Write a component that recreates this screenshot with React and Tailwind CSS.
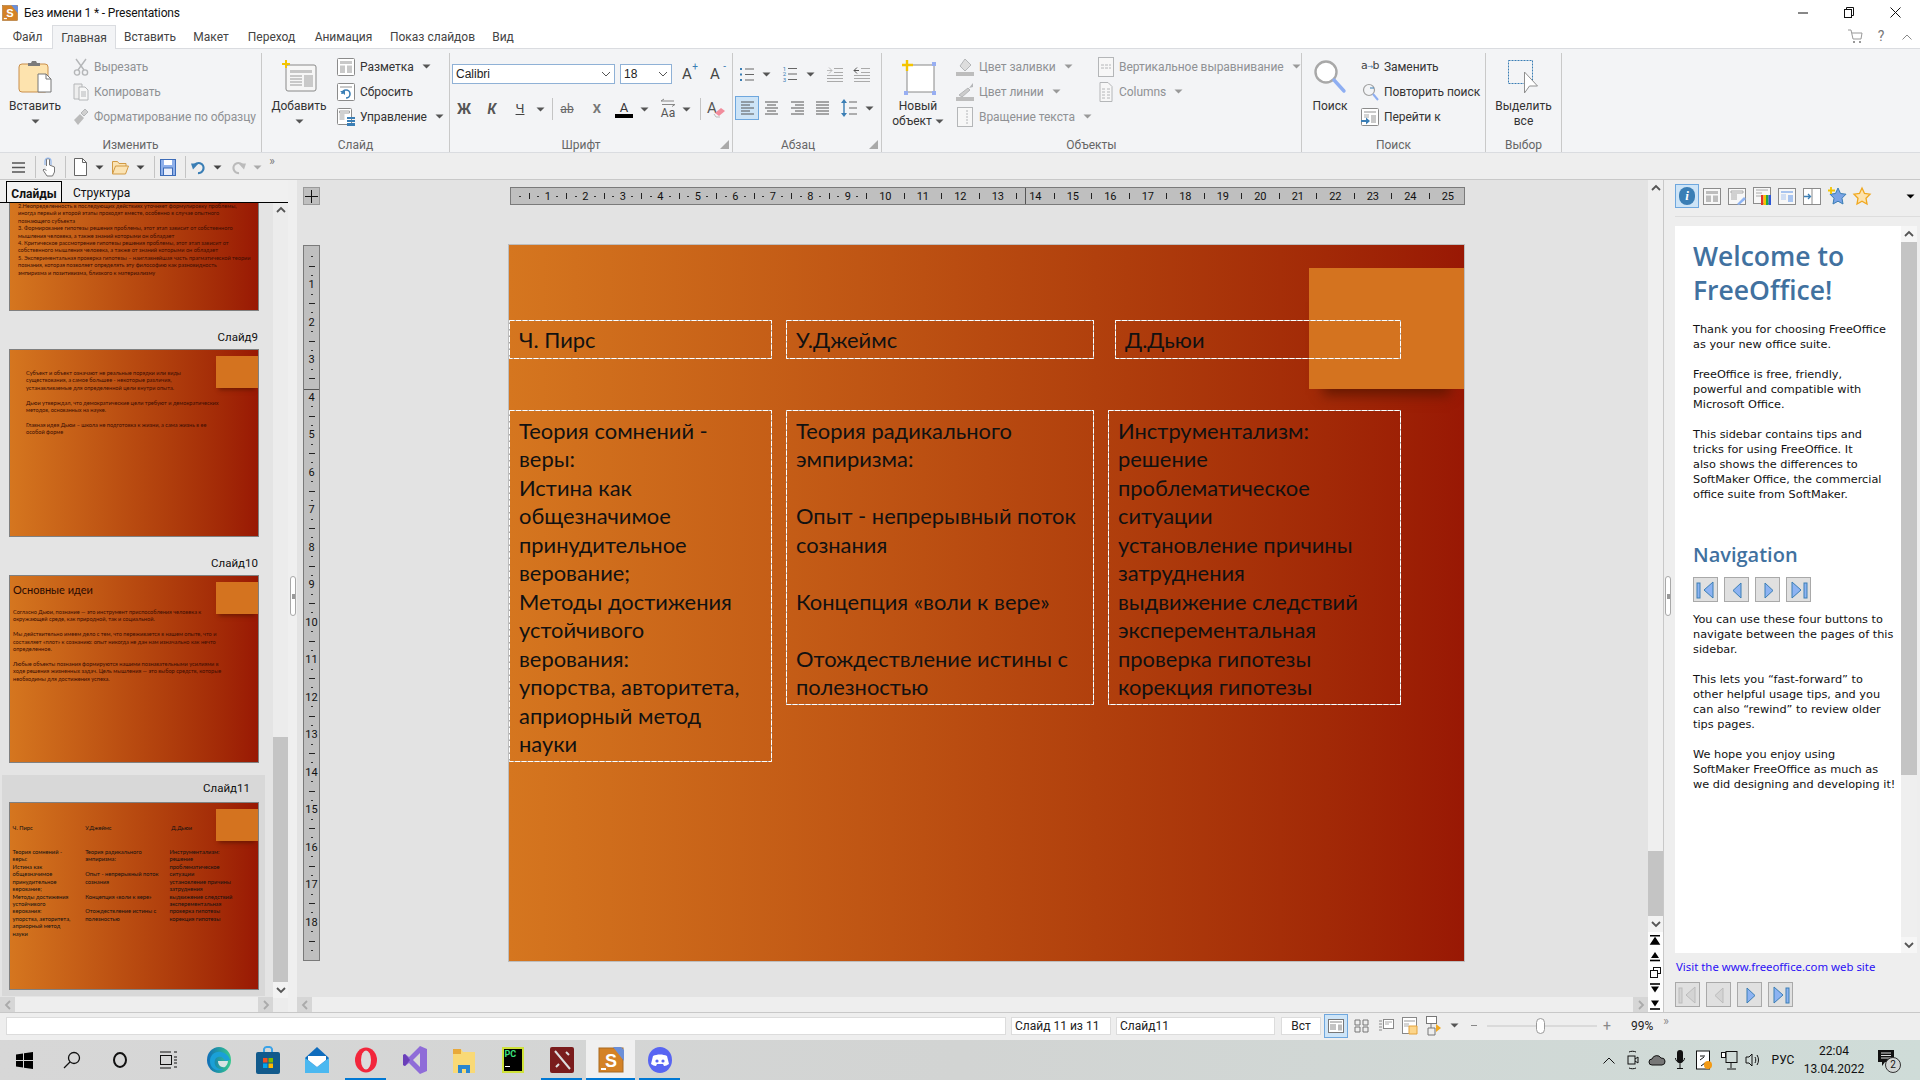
import React from "react";

const S = ({ w, h, children, className = "" }) => (
  <svg width={w} height={h} viewBox={`0 0 ${w} ${h}`} fill="none" className={"flex-none overflow-visible " + className}>{children}</svg>
);
const Caret = ({ c = "#555" }) => <S w={9} h={5}><path d="M0.5 0.5h8L4.5 4.5z" fill={c} /></S>;
const Dim = "#b4b6b8";
const Cell = ({ w, className = "", children }) => <div className={"flex items-center justify-center flex-none " + w + " " + className}>{children}</div>;
const Sep = ({ className = "" }) => <div className={"w-px h-[22px] bg-[#c4c4c4] flex-none " + className} />;

/* ---------- ribbon icons ---------- */
const PasteIcon = () => (
  <S w={34} h={33}>
    <rect x="1" y="4" width="29" height="28" rx="3" fill="#fde3ae" stroke="#c98e4a" />
    <path d="M10 6V3h3l1-2h4l1 2h3v3z" fill="#7b7b7b" />
    <path d="M20 14h8l5 5v13H20z" fill="#fff" stroke="#777" />
    <path d="M28 14v5h5" stroke="#777" />
  </S>
);
const CutIcon = () => (
  <S w={16} h={18}>
    <path d="M3 1l8 11M13 1L5 12" stroke={Dim} strokeWidth="1.4" />
    <circle cx="4" cy="14.5" r="2.6" stroke={Dim} strokeWidth="1.4" />
    <circle cx="12" cy="14.5" r="2.6" stroke={Dim} strokeWidth="1.4" />
  </S>
);
const CopyIcon = () => (
  <S w={16} h={18}>
    <path d="M1 1h8v15H1z" fill="#eee" stroke={Dim} />
    <path d="M6 4h6l3 3v10H6z" fill="#f7f7f7" stroke={Dim} />
    <path d="M8 9h5M8 11h5M8 13h5" stroke={Dim} />
  </S>
);
const BrushIcon = () => (
  <S w={16} h={18}>
    <path d="M1 12l6-6 4 4-6 7z" fill="#bbb" />
    <path d="M8 5l4-4 3 3-4 4z" fill="#d0d0d0" stroke={Dim} />
  </S>
);
const AddIcon = () => (
  <S w={34} h={32}>
    <rect x="4" y="5" width="30" height="26" rx="2" fill="#f6f6f6" stroke="#888" />
    <path d="M8 10h22v3H8z" fill="#c6c6c6" />
    <path d="M8 16h12M8 19h12M8 22h12M8 25h12" stroke="#9a9a9a" />
    <rect x="22" y="15" width="9" height="12" fill="#c9c9c9" />
    <path d="M4 0v8M0 4h8" stroke="#f4c400" strokeWidth="2" />
  </S>
);
const LayoutIcon = () => (
  <S w={18} h={18}>
    <rect x=".5" y=".5" width="17" height="17" rx="1" fill="#fff" stroke="#8b8b8b" />
    <path d="M3 3h12v3H3zM3 7.5h5V15H3zM10 7.5h5V15h-5z" fill="#c9c9c9" />
  </S>
);
const ResetIcon = () => (
  <S w={18} h={18}>
    <rect x=".5" y=".5" width="17" height="17" rx="1" fill="#fff" stroke="#8b8b8b" />
    <path d="M3 3h12v2H3z" fill="#c9c9c9" />
    <path d="M5 11a4 4 0 1 1 4 4" stroke="#3a7eb5" strokeWidth="1.6" />
    <path d="M3 8h5v4z" fill="#3a7eb5" />
  </S>
);
const ManageIcon = () => (
  <S w={18} h={18}>
    <rect x=".5" y=".5" width="14" height="16" rx="1" fill="#fff" stroke="#8b8b8b" />
    <path d="M2.5 3h10v2h-10zM2.5 7h5M2.5 9h5M2.5 11h5" stroke="#a2a2a2" />
    <path d="M10 9h8v2h-8zM10 12h8v2h-8zM10 15h8v3h-8z" fill="#3a7eb5" />
  </S>
);
const GrowA = ({ s }) => (
  <span className="relative text-[15px] leading-[20px] text-[#444]">
    A<span className="absolute -right-[6px] -top-[3px] text-[10px] leading-[12px] text-[#3a7eb5]">{s}</span>
  </span>
);
const Bullets = () => (
  <S w={14} h={15}>
    <path d="M0 1h2v2H0zM0 6.5h2v2H0zM0 12h2v2H0z" fill="#3a7eb5" />
    <path d="M5 2h9M5 7.5h9M5 13h9" stroke="#666" />
  </S>
);
const Numbers = () => (
  <div className="flex items-center gap-[1px]">
    <div className="flex flex-col text-[6px] leading-[5.500px] text-[#3a7eb5]"><span>1</span><span>2</span><span>3</span></div>
    <S w={10} h={16}><path d="M1 2.500h9M1 8h9M1 13.500h9" stroke="#666" /></S>
  </div>
);
const Indent = ({ flip }) => (
  <S w={16} h={16}>
    <path d="M0 15.500h16M0 12.500h16M0 9.500h16M7 6.500h9M7 2.500h9" stroke="#aaa" />
    {flip ? <path d="M0 4.500h5M0 4.500l3-3M0 4.500l3 3" stroke="#555" /> : <path d="M5 4.500H0M5 4.500l-3-3M5 4.500l-3 3" stroke="#bbb" />}
  </S>
);
const Align = ({ kind }) => {
  const L = kind === "l" ? ["M0 1h13", "M0 4h9", "M0 7h13", "M0 10h9", "M0 13h13"] :
    kind === "c" ? ["M0 1h13", "M2 4h9", "M0 7h13", "M2 10h9", "M0 13h13"] :
    kind === "r" ? ["M0 1h13", "M4 4h9", "M0 7h13", "M4 10h9", "M0 13h13"] :
    ["M0 1h13", "M0 4h13", "M0 7h13", "M0 10h13", "M0 13h13"];
  return <S w={13} h={14}>{L.map((d, i) => <path key={i} d={d} stroke="#555" />)}</S>;
};
const LineSpace = () => (
  <S w={16} h={18}>
    <path d="M3 2v14" stroke="#3a7eb5" strokeWidth="1.4" />
    <path d="M0 4l3-4 3 4zM0 14l3 4 3-4z" fill="#3a7eb5" />
    <path d="M8 3h8M8 9h8M8 15h8" stroke="#666" />
  </S>
);
const Launcher = () => <S w={9} h={9}><path d="M9 0v9H0z" fill="#a9a9a9" /></S>;
const NewObj = () => (
  <S w={33} h={34}>
    <rect x="5" y="5" width="27" height="27" fill="#fff" stroke="#888" />
    <path d="M30 2h4v4h-4zM2 31h4v4H2zM30 31h4v4h-4z" fill="#97aef2" />
    <path d="M5 0v11M0 5h11" stroke="#f4c400" strokeWidth="2.4" />
  </S>
);
const FillIcon = () => (
  <S w={18} h={20}>
    <path d="M4 9l5-7 6 6-6 6z" fill="#ddd" stroke={Dim} />
    <path d="M0 15h18v4H0z" fill="#bdbdbd" />
  </S>
);
const LineColIcon = () => (
  <S w={18} h={20}>
    <path d="M3 13l9-7 2 2-8 7z" fill="#ccc" stroke={Dim} />
    <path d="M13 6l4-5v4z" fill={Dim} />
    <path d="M0 15h18v4H0z" fill="#bdbdbd" />
  </S>
);
const RotIcon = () => (
  <S w={16} h={20}>
    <rect x=".5" y=".5" width="15" height="19" fill="#f7f7f7" stroke={Dim} />
    <path d="M10 3v14" stroke={Dim} strokeDasharray="2 1" />
  </S>
);
const VAlign = () => (
  <S w={16} h={20}>
    <rect x=".5" y=".5" width="15" height="19" fill="#f7f7f7" stroke={Dim} />
    <path d="M3 8h3M7 8h3M11 8h2M3 11h3M7 11h3M11 11h2" stroke={Dim} />
  </S>
);
const ColsIcon = () => (
  <S w={14} h={20}>
    <path d="M1 .5h8l4 4v15H1z" fill="#f7f7f7" stroke={Dim} />
    <path d="M3 7h3M8 7h3M3 10h3M8 10h3M3 13h3M8 13h3M3 16h3M8 16h3" stroke={Dim} />
  </S>
);
const SearchBig = () => (
  <S w={32} h={32}>
    <circle cx="12" cy="12" r="10.500" fill="#fff" stroke="#a8a8a8" strokeWidth="2.4" />
    <path d="M20 20l10 11" stroke="#8eaef2" strokeWidth="3.4" strokeLinecap="round" />
  </S>
);
const SearchRepeat = () => (
  <S w={16} h={18}>
    <circle cx="7" cy="7" r="5.500" stroke="#a0a0a0" strokeWidth="1.200" />
    <path d="M11 11l5 6" stroke="#8eaef2" strokeWidth="2" />
    <path d="M8 5h4" stroke="#3a7eb5" />
  </S>
);
const GoTo = () => (
  <S w={18} h={18}>
    <rect x=".5" y=".5" width="17" height="17" rx="1" fill="#fff" stroke="#8b8b8b" />
    <path d="M3 3h12v2H3zM10 7h5v8h-5z" fill="#c9c9c9" />
    <path d="M3 7h5M3 9h5" stroke="#aaa" />
    <path d="M0 12h5V9.500l4 3.500-4 3.500V14H0z" fill="#3a7eb5" />
  </S>
);
const SelectAll = () => (
  <S w={31} h={35}>
    <rect x=".5" y=".5" width="24" height="23" stroke="#3a7eb5" strokeDasharray="2 1" />
    <path d="M16.500 12v21l5-7 8 0z" fill="#fff" stroke="#8f8f8f" />
  </S>
);

/* ---------- quick toolbar icons ---------- */
const Burger = () => <S w={13} h={11}><path d="M0 1h13M0 5.500h13M0 10h13" stroke="#555" strokeWidth="1.500" /></S>;
const Hand = () => (
  <S w={14} h={20}>
    <path d="M4.500 9V3a1.500 1.500 0 0 1 3 0v5l5 2v5l-2 4H5L1 13l1-1 2.500 1.500" fill="#fff" stroke="#777" />
    <path d="M6 1a3 3 0 0 0-3 3v4M6 1a3 3 0 0 1 3 3v4" stroke="#93b6ea" strokeWidth="1.200" />
  </S>
);
const DocIc = () => <S w={13} h={18}><path d="M.5.5h8l4 4v13H.5z" fill="#fff" stroke="#666" /><path d="M8.500.5v4h4" stroke="#666" /></S>;
const FolderIc = () => <S w={17} h={15}><path d="M.5 14V1.500h5l1.500 2h7v2.500" fill="#fbe3b3" stroke="#d19a45" /><path d="M.5 14l3-8h13l-3 8z" fill="#fbe3b3" stroke="#d19a45" /></S>;
const SaveIc = () => (
  <S w={16} h={17}>
    <rect x=".5" y=".5" width="15" height="16" fill="#8fb0ea" stroke="#3d6cb8" />
    <rect x="4" y="1" width="8" height="5" fill="#fff" />
    <rect x="3.500" y="9" width="9" height="7.500" fill="#e9eefb" stroke="#3d6cb8" />
  </S>
);
const UndoIc = ({ c = "#3a7eb5", flip }) => (
  <S w={15} h={14} className={flip ? "-scale-x-100" : ""}>
    <path d="M3 6a5 5 0 1 1 4 7" stroke={c} strokeWidth="2.200" />
    <path d="M0 3.500h7.500L2 9.500z" fill={c} />
  </S>
);

/* ---------- ribbon parts ---------- */
const Small = ({ icon, label, iw = "w-[16px]", dim, caret, className = "" }) => (
  <div className={"h-[25px] flex items-center gap-[5px] " + className}>
    <div className={"flex items-center justify-center flex-none " + iw}>{icon}</div>
    <span className={"whitespace-nowrap tracking-[-0.06px] " + (dim ? "text-[#8f9194]" : "text-[#333]")}>{label}</span>
    {caret && <span className="ml-[3px]"><Caret c={dim ? "#999" : "#555"} /></span>}
  </div>
);
const Large = ({ icon, lines, caret, w }) => (
  <div className={"flex flex-col items-center flex-none text-[#333] " + w}>
    <div className="h-[45px] pt-[6px] flex justify-center">{icon}</div>
    {lines.map((t, i) => (
      <div key={i} className="leading-[15px] h-[15px] whitespace-nowrap flex items-center gap-[3px]">
        {t}{caret === "inline" && i === lines.length - 1 && <Caret />}
      </div>
    ))}
    {caret === "below" && <div className="h-[15px] flex items-center"><Caret /></div>}
  </div>
);
const Group = ({ w, label, children, launcher, pad = "pt-[2px]", labelCls = "" }) => (
  <div className={"relative flex flex-col flex-none border-r border-[#c9c9c9] mt-[4px] h-[99px] " + w}>
    <div className={"h-[83px] " + pad}>{children}</div>
    <div className={"h-[16px] pt-[2px] flex items-center justify-center text-[#666] leading-none " + labelCls}>{label}</div>
    {launcher && <div className="absolute right-[3px] bottom-[3px] flex"><Launcher /></div>}
  </div>
);

const Ribbon = () => (
  <div className="h-[105px] bg-[#f3f4f6] border-y border-[#dadce0] flex flex-none">
    <Group w="w-[262px]" label="Изменить">
      <div className="flex -mt-[1px]">
        <Large w="w-[70px]" icon={<PasteIcon />} lines={["Вставить"]} caret="below" />
        <div className="ml-[3px]">
          <Small dim icon={<CutIcon />} label="Вырезать" />
          <Small dim icon={<CopyIcon />} label="Копировать" />
          <Small dim icon={<BrushIcon />} label="Форматирование по образцу" />
        </div>
      </div>
    </Group>
    <Group w="w-[188px]" label="Слайд">
      <div className="flex -mt-[1px]">
        <Large w="w-[74px]" icon={<AddIcon />} lines={["Добавить"]} caret="below" />
        <div className="ml-[1px]">
          <Small iw="w-[18px]" icon={<LayoutIcon />} label="Разметка" caret />
          <Small iw="w-[18px]" icon={<ResetIcon />} label="Сбросить" />
          <Small iw="w-[18px]" icon={<ManageIcon />} label="Управление" caret />
        </div>
      </div>
    </Group>
    <Group w="w-[283px]" label="Шрифт" launcher pad="pt-[11px]" labelCls="pr-[20px]">
      <div className="flex items-center h-[20px]">
        <div className="ml-[2px] w-[163px] h-[20px] bg-white border border-[#8fb1d6] flex items-center justify-between px-[3px]">
          <span className="font-['Liberation_Sans',sans-serif] text-[12px] leading-[16px] text-[#222]">Calibri</span>
          <S w={10} h={6}><path d="M1 1l4 4 4-4" stroke="#555" /></S>
        </div>
        <div className="ml-[5px] w-[52px] h-[20px] bg-white border border-[#8fb1d6] flex items-center justify-between px-[3px]">
          <span className="font-['Liberation_Sans',sans-serif] text-[12px] leading-[16px] text-[#222]">18</span>
          <S w={10} h={6}><path d="M1 1l4 4 4-4" stroke="#555" /></S>
        </div>
        <Cell w="w-[26px] ml-[2px]"><GrowA s="+" /></Cell>
        <Cell w="w-[26px] ml-[2px]"><GrowA s="-" /></Cell>
      </div>
      <div className="flex items-center h-[24px] mt-[13px] text-[#444]">
        <Cell w="w-[28px]" className="font-bold text-[14px] text-[#555]">Ж</Cell>
        <Cell w="w-[28px]" className="font-bold italic text-[14px] text-[#555]">К</Cell>
        <Cell w="w-[18px] ml-[5px]" className="text-[13px] underline text-[#444]">Ч</Cell>
        <Cell w="w-[20px] ml-[1px]"><Caret /></Cell>
        <Sep className="ml-[2px]" />
        <Cell w="w-[28px]" className="text-[12px] line-through text-[#666]">ab</Cell>
        <Cell w="w-[32px]" className="font-bold text-[13px] text-[#777]">X</Cell>
        <Cell w="w-[22px]" className="flex-col text-[13px] leading-[13px] text-[#333]"><span>A</span><span className="block w-[18px] h-[4px] bg-black" /></Cell>
        <Cell w="w-[18px]"><Caret /></Cell>
        <Cell w="w-[24px] ml-[3px]">
          <div className="flex flex-col items-center">
            <S w={14} h={8}><path d="M0 2h13M1 5.500h13M0 2l3-2M14 5.500l-3 2" stroke="#888" /></S>
            <span className="text-[12px] leading-[12px] text-[#555]">Aa</span>
          </div>
        </Cell>
        <Cell w="w-[12px]"><Caret /></Cell>
        <Sep className="ml-[8px]" />
        <Cell w="w-[30px]">
          <div className="relative h-[18px] w-[18px] text-[15px] leading-[16px] text-[#555]">
            A
            <S w={11} h={10} className="absolute left-[7px] top-[7px]"><path d="M1 6l6-5 4 3-6 5z" fill="#f18c9c" /><path d="M0 7l2 3h4" stroke="#bbb" /></S>
          </div>
        </Cell>
      </div>
    </Group>
    <Group w="w-[149px]" label="Абзац" launcher pad="pt-[11px]" labelCls="pr-[18px]">
      <div className="flex items-center h-[20px]">
        <Cell w="w-[28px]"><Bullets /></Cell>
        <Cell w="w-[10px]"><Caret /></Cell>
        <Cell w="w-[30px] ml-[4px]"><Numbers /></Cell>
        <Cell w="w-[10px]"><Caret /></Cell>
        <Cell w="w-[30px] ml-[5px]"><Indent flip={false} /></Cell>
        <Cell w="w-[24px]"><Indent flip /></Cell>
      </div>
      <div className="flex items-center h-[24px] mt-[12px]">
        <Cell w="w-[24px] h-[24px] ml-[2px]" className="bg-[#cde4f7] border border-[#6ea7de]"><Align kind="l" /></Cell>
        <Cell w="w-[24px]"><Align kind="c" /></Cell>
        <Cell w="w-[24px] ml-[2px]"><Align kind="r" /></Cell>
        <Cell w="w-[24px] ml-[1px]"><Align kind="j" /></Cell>
        <Cell w="w-[24px] ml-[3px]"><LineSpace /></Cell>
        <Cell w="w-[16px]"><Caret /></Cell>
      </div>
    </Group>
    <Group w="w-[420px]" label="Объекты">
      <div className="flex -mt-[1px]">
        <Large w="w-[72px]" icon={<NewObj />} lines={["Новый", "объект"]} caret="inline" />
        <div className="ml-[2px] w-[141px]">
          <Small dim iw="w-[18px]" icon={<FillIcon />} label="Цвет заливки" caret />
          <Small dim iw="w-[18px]" icon={<LineColIcon />} label="Цвет линии" caret />
          <Small dim iw="w-[18px]" icon={<RotIcon />} label="Вращение текста" caret />
        </div>
        <div>
          <Small dim iw="w-[17px]" icon={<VAlign />} label="Вертикальное выравнивание" caret />
          <Small dim iw="w-[17px]" icon={<ColsIcon />} label="Columns" caret />
        </div>
      </div>
    </Group>
    <Group w="w-[184px]" label="Поиск">
      <div className="flex -mt-[1px]">
        <Large w="w-[56px]" icon={<SearchBig />} lines={["Поиск"]} />
        <div className="ml-[3px]">
          <Small iw="w-[18px]" icon={<span className="text-[11px] tracking-[-0.5px] text-[#444] whitespace-nowrap font-['DejaVu_Sans',sans-serif]">a<span className="text-[7px] text-[#3a7eb5]">→</span>b</span>} label="Заменить" />
          <Small iw="w-[18px]" icon={<SearchRepeat />} label="Повторить поиск" />
          <Small iw="w-[18px]" icon={<GoTo />} label="Перейти к" />
        </div>
      </div>
    </Group>
    <Group w="w-[76px]" label="Выбор">
      <div className="-mt-[1px]">
        <Large w="w-full" icon={<SelectAll />} lines={["Выделить", "все"]} />
      </div>
    </Group>
  </div>
);

/* ---------- rulers ---------- */
const HRuler = () => {
  const cells = [];
  for (let i = 1; i <= 101; i++) {
    const n = i / 4;
    let c = null;
    if (i % 4 === 0) c = <span className="text-[11px] text-[#111] leading-none">{n}</span>;
    else if (i === 55) c = <span className="w-px h-[18px] bg-[#555]" />;
    else if (i % 4 === 2) c = <span className="w-px h-[6px] bg-[#222]" />;
    else if (i < 38) c = <span className="w-[2px] h-px bg-[#333]" />;
    cells.push(<div key={i} className="w-[9.390px] h-full flex-none flex items-center justify-center overflow-visible">{c}</div>);
  }
  return <div className="w-[955px] h-[18px] bg-[#bfbfbf] border border-[#7a7a7a] flex pl-[4px] overflow-hidden flex-none">{cells}</div>;
};
const VRuler = () => {
  const cells = [];
  for (let i = 1; i <= 75; i++) {
    let c = null;
    if (i % 4 === 0) c = <span className="text-[11px] text-[#111] leading-none">{i / 4}</span>;
    else if (i === 15) c = <span className="w-full h-px bg-[#555] translate-y-[2px]" />;
    else if (i % 4 === 2) c = <span className="w-[6px] h-px bg-[#222]" />;
    else c = <span className="w-[2px] h-px bg-[#333]" />;
    cells.push(<div key={i} className="h-[9.375px] w-full flex-none flex items-center justify-center overflow-visible">{c}</div>);
  }
  return <div className="w-[17px] h-[716px] bg-[#bfbfbf] border border-[#7a7a7a] flex flex-col pt-[6px] overflow-hidden flex-none">{cells}</div>;
};

/* ---------- slide ---------- */
const grad = "bg-linear-to-r from-[#d5761f] via-[#b84a10] to-[#991804]";
const T = "font-['Lato','Noto_Sans',sans-serif] text-[21.900px] leading-[28.500px] text-[#111]";
const Box = ({ className, dashed, w, h, children }) => (
  <div className={"absolute " + T + " " + className}>
    {dashed && (
      <svg width={w} height={h} className="absolute left-0 top-0">
        <rect x=".5" y=".5" width={w - 1} height={h - 1} stroke="#a9a9a9" fill="none" />
        <rect x=".5" y=".5" width={w - 1} height={h - 1} stroke="#ffffff" fill="none" strokeDasharray="5 1.500" />
      </svg>
    )}
    <div className="relative">{children}</div>
  </div>
);
const body1 = ["Теория сомнений -", "веры:", "Истина как", "общезначимое", "принудительное", "верование;", "Методы достижения", "устойчивого", "верования:", "упорства, авторитета,", "априорный метод", "науки"];
const body2 = ["Теория радикального", "эмпиризма:", "\u00a0", "Опыт - непрерывный поток", "сознания", "\u00a0", "Концепция «воли к вере»", "\u00a0", "Отождествление истины с", "полезностью"];
const body3 = ["Инструментализм:", "решение", "проблематическое", "ситуации", "установление причины", "затруднения", "выдвижение следствий", "эксперементальная", "проверка гипотезы", "корекция гипотезы"];
const Lines = ({ items }) => items.map((l, i) => <div key={i} className="whitespace-nowrap">{l}</div>);

const Boxes = ({ dashed }) => (
  <>
    <Box dashed={dashed} w={263} h={39} className="left-0 top-[75px] w-[263px] h-[39px] flex items-center pl-[10px] pt-[1px]">Ч. Пирс</Box>
    <Box dashed={dashed} w={308} h={39} className="left-[277px] top-[75px] w-[308px] h-[39px] flex items-center pl-[10px] pt-[1px]">У.Джеймс</Box>
    <Box dashed={dashed} w={286} h={39} className="left-[606px] top-[75px] w-[286px] h-[39px] flex items-center pl-[10px] pt-[1px]">Д.Дьюи</Box>
    <Box dashed={dashed} w={263} h={352} className="left-0 top-[165px] w-[263px] h-[352px] pl-[10px] pt-[6.500px]"><Lines items={body1} /></Box>
    <Box dashed={dashed} w={308} h={295} className="left-[277px] top-[165px] w-[308px] h-[295px] pl-[10px] pt-[6.500px]"><Lines items={body2} /></Box>
    <Box dashed={dashed} w={293} h={295} className="left-[599px] top-[165px] w-[293px] h-[295px] pl-[10px] pt-[6.500px]"><Lines items={body3} /></Box>
  </>
);

/* ---------- thumbnails ---------- */
const Thumb = ({ children }) => (
  <div className={"relative w-[250px] h-[188px] flex-none ml-[9px] border border-[#808080] overflow-hidden " + grad}>
    <div className="absolute left-[206px] top-[6px] w-[42px] h-[32px] bg-[#d4731f] shadow-[0_5px_4px_-3px_rgba(90,22,0,0.7)]" />
    {children}
  </div>
);
const Tiny = ({ lines, className }) => (
  <div className={"absolute font-['Lato','Noto_Sans',sans-serif] text-[#3a0d03] text-[5.600px] leading-[7.400px] whitespace-nowrap " + className}>
    {lines.map((l, i) => <div key={i}>{l}</div>)}
  </div>
);
const Label = ({ children, className = "" }) => (
  <div className={"flex items-end justify-end pr-[15px] text-[11.500px] leading-[18px] text-[#111] font-['Roboto',sans-serif] " + className}>{children}</div>
);
const t8 = [
  "2.Неопределенность в последующих действиях уточняет формулировку проблемы,",
  "иногда первый и второй этапы проходят вместе, особенно в случае опытного",
  "познающего субъекта",
  "3. Формирование гипотезы решения проблемы, этот этап зависит от собственного",
  "мышления человека, а также знаний которыми он обладает",
  "4. Критическое рассмотрение гипотезы решения проблемы, этот этап зависит от",
  "собственного мышления человека, а также от знаний которыми он обладает",
  "5. Экспериментальная проверка гипотезы – наиглавнейшая часть прагматической теории",
  "познания, которая позволяет определять эту философию как разновидность",
  "эмпиризма и позитивизма, близкого к материализму",
];
const t9 = [
  "Субъект и объект означают не реальные порядки или виды",
  "существования, а самое большее - некоторые различия,",
  "устанавливаемые для определенной цели внутри опыта.",
  "\u00a0",
  "Дьюи утверждал, что демократические цели требуют и демократических",
  "методов, основанных на науке.",
  "\u00a0",
  "Главная идея Дьюи – школа не подготовка к жизни, а сама жизнь в ее",
  "особой форме",
];
const t10 = [
  "Согласно Дьюи, познание — это инструмент приспособления человека к",
  "окружающей среде, как природной, так и социальной.",
  "\u00a0",
  "Мы действительно имеем дело с тем, что переживается в нашем опыте, что и",
  "составляет «плот» к сознанию: опыт никогда не дан нам изначально как нечто",
  "определенное.",
  "\u00a0",
  "Любые объекты познания формируются нашими познавательными усилиями в",
  "ходе решения жизненных задач. Цель мышления — это выбор средств, которые",
  "необходимы для достижения успеха.",
];

const Chev = ({ dir = "up", c = "#555" }) => {
  const d = { up: "M1 5l4-4 4 4", down: "M1 1l4 4 4-4", left: "M5 1L1 5l4 4", right: "M1 1l4 4-4 4" }[dir];
  const v = dir === "up" || dir === "down";
  return <S w={v ? 10 : 6} h={v ? 6 : 10}><path d={d} stroke={c} strokeWidth="1.800" /></S>;
};

const LeftPane = () => (
  <div className="w-[288px] flex-none flex flex-col bg-[#eeeeee]">
    <div className="h-[23px] flex items-end border-b border-black pl-[6px] bg-[#f0f0f0] text-[12px] text-[#111] flex-none">
      <div className="w-[56px] h-[21px] pt-[3px] border-x border-t border-black flex items-center justify-center font-bold bg-[#f3f3f3]">Слайды</div>
      <div className="ml-[11px] h-[21px] pt-[3px] flex items-center">Структура</div>
    </div>
    <div className="flex flex-1 min-h-0">
      <div className="w-[273px] flex flex-col bg-[#e4e4e4] flex-none">
        <div className="flex-1 min-h-0 overflow-hidden flex flex-col">
          <div className="-mt-[80px]">
            <Thumb><Tiny className="left-[8px] top-[78px]" lines={t8} /></Thumb>
          </div>
          <Label className="h-[38px] pb-[3px]">Слайд9</Label>
          <Thumb><Tiny className="left-[16px] top-[19px]" lines={t9} /></Thumb>
          <Label className="h-[38px] pb-[3px]">Слайд10</Label>
          <Thumb>
            <div className="absolute left-[3px] top-[7px] font-['Lato',sans-serif] text-[11px] leading-[13px] text-[#2a0a02]">Основные идеи</div>
            <Tiny className="left-[3px] top-[32px]" lines={t10} />
          </Thumb>
          <div className="mt-[12px] ml-[2px] w-[263px] h-[221px] bg-[#d8d8d8] flex-none">
            <Label className="h-[27px] pb-[5px] pr-[13px]">Слайд11</Label>
            <div className="-ml-[2px]">
              <Thumb>
                <div className="w-[955px] h-[716px] relative scale-[0.2618] origin-top-left"><Boxes /></div>
              </Thumb>
            </div>
          </div>
        </div>
        <div className="h-[15px] flex-none flex justify-between bg-[#eeeeee]">
          <div className="w-[15px] bg-[#d6d6d6] flex items-center justify-center"><Chev dir="left" c="#aaa" /></div>
          <div className="w-[15px] bg-[#d6d6d6] flex items-center justify-center"><Chev dir="right" c="#aaa" /></div>
        </div>
      </div>
      <div className="w-[15px] flex-none bg-[#ececec] flex flex-col">
        <div className="h-[14px] flex items-center justify-center"><Chev dir="up" /></div>
        <div className="mt-[520px] h-[245px] bg-[#c4c4c4]" />
        <div className="h-[16px] flex items-center justify-center bg-[#f2f2f2]"><Chev dir="down" /></div>
      </div>
    </div>
  </div>
);

const Handle = ({ className }) => (
  <div className={"absolute w-[6px] h-[40px] rounded-[3px] bg-white border border-[#a8a8a8] flex items-center justify-center " + className}>
    <span className="block w-[3px] h-[5px] bg-[#999]" />
  </div>
);

const Editor = () => (
  <div className="w-[1351px] flex-none bg-[#e3e3e3] flex flex-col">
    <div className="flex pt-[7px] flex-none">
      <div className="ml-[6px] w-[17px] h-[18px] bg-[#bfbfbf] border border-[#9a9a9a] flex items-center justify-center">
        <S w={13} h={13}><path d="M6.500 0v13M0 6.500h13" stroke="#111" /></S>
      </div>
      <div className="ml-[190px]"><HRuler /></div>
    </div>
    <div className="flex mt-[40px] flex-none">
      <div className="ml-[6px]"><VRuler /></div>
      <div className={"relative ml-[189px] w-[955px] h-[716px] overflow-hidden outline outline-[#bdbdbd] " + grad}>
        <div className="absolute left-[800px] top-[23px] w-[155px] h-[121px] bg-[#d4731f] shadow-[0_20px_12px_-14px_rgba(90,22,0,0.85)]" />
        <Boxes dashed />
      </div>
    </div>
    <div className="flex-1" />
    <div className="h-[15px] flex-none bg-[#eeeeee] flex justify-between">
      <div className="w-[15px] bg-[#d6d6d6] flex items-center justify-center"><Chev dir="left" c="#aaa" /></div>
      <div className="w-[15px] bg-[#d6d6d6] flex items-center justify-center"><Chev dir="right" c="#aaa" /></div>
    </div>
  </div>
);

const VBtn = ({ d }) => (
  <div className="h-[16px] flex items-center justify-center bg-[#fdfdfd]">
    <S w={11} h={11}>{d}</S>
  </div>
);
const EditorScroll = () => (
  <div className="w-[16px] flex-none bg-[#efefef] border-r border-[#c8c8c8] flex flex-col">
    <div className="h-[16px] flex items-center justify-center"><Chev dir="up" /></div>
    <div className="mt-[655px] h-[65px] bg-[#c4c4c4] flex-none" />
    <div className="h-[16px] flex items-center justify-center bg-[#f2f2f2]"><Chev dir="down" /></div>
    <VBtn d={<><path d="M0 .8h10M5 3l4 6H1z" stroke="#000" strokeWidth="1.400" fill="#000" /></>} />
    <VBtn d={<><path d="M5 1l4 6H1z" fill="#000" /><path d="M0 9.500h10" stroke="#000" strokeWidth="1.600" /></>} />
    <VBtn d={<><rect x="3.500" y=".5" width="7" height="6" fill="#fff" stroke="#111" /><rect x=".5" y="3.500" width="7" height="7" fill="#fff" stroke="#111" /></>} />
    <VBtn d={<><path d="M0 1h10" stroke="#000" strokeWidth="1.600" /><path d="M1 3.500h8L5 9.500z" fill="#000" /></>} />
    <VBtn d={<><path d="M1 1.500h8L5 7.500z" fill="#000" /><path d="M0 10h10" stroke="#000" strokeWidth="1.600" /></>} />
  </div>
);

/* ---------- sidebar ---------- */
const NavBtn = ({ k, on = true }) => {
  const f = on ? "#8db3f2" : "#d4d4d4", s = on ? "#3a7eb5" : "#bcbcbc";
  const g = {
    first: <><rect x="1" y="3" width="3" height="15" fill={f} stroke={s} /><path d="M17 2v16L8 10z" fill={f} stroke={s} /></>,
    prev: <path d="M14 3v15L6 10.500z" fill={f} stroke={s} />,
    next: <path d="M7 3v15l8-7.500z" fill={f} stroke={s} />,
    last: <><path d="M3 2v16l9-8z" fill={f} stroke={s} /><rect x="15" y="3" width="3" height="15" fill={f} stroke={s} /></>,
  }[k];
  return (
    <div className="w-[25px] h-[25px] bg-[#e0e0e0] border border-[#a9a9a9] flex items-center justify-center flex-none">
      <S w={20} h={20}>{g}</S>
    </div>
  );
};
const SB = ({ children }) => <div className="flex items-center justify-center w-[25px] flex-none">{children}</div>;
const Sidebar = () => (
  <div className="relative w-[256px] flex-none bg-[#eeeeee] pl-[11px] flex flex-col">
    <div className="flex items-center h-[24px] mt-[4px] flex-none">
      <div className="w-[24px] h-[24px] bg-[#cde4f7] border border-[#6ea7de] flex items-center justify-center flex-none">
        <div className="w-[16px] h-[18px] rounded-full bg-[#3a7eb5] text-white font-['Liberation_Serif',serif] font-bold italic text-[13px] leading-[18px] text-center">i</div>
      </div>
      <div className="flex">
        <SB><S w={18} h={17}><rect x=".5" y=".5" width="17" height="16" fill="#f7f7f7" stroke="#8b8b8b" /><path d="M3 3h12v3H3zM3 7.500h5V14H3zM10 7.500h5V14h-5z" fill="#bdbdbd" /></S></SB>
        <SB><S w={18} h={17}><rect x=".5" y=".5" width="17" height="16" fill="#f7f7f7" stroke="#8b8b8b" /><path d="M3 3h12v2H3zM3 7h6M3 9h6M3 11h6" stroke="#aaa" /><path d="M9 16l7-7 2 2-7 6z" fill="#8db3f2" /></S></SB>
        <SB><S w={18} h={18}><rect x=".5" y=".5" width="17" height="16" fill="#f7f7f7" stroke="#8b8b8b" /><path d="M3 3h12M3 6h6M3 9h6" stroke="#aaa" /><path d="M8 8h2.500v10H8z" fill="#e0342c" /><path d="M10.500 8H13v10h-2.500z" fill="#f4c400" /><path d="M13 8h2.500v10H13z" fill="#27a845" /><path d="M15.500 8H18v10h-2.500z" fill="#2d56d6" /></S></SB>
        <SB><S w={18} h={17}><rect x=".5" y=".5" width="17" height="16" fill="#f7f7f7" stroke="#8b8b8b" /><path d="M3 3h12v2H3zM10 7h5v7h-5z" fill="#a8c4ef" /><path d="M3 7h5M3 9h5M3 11h5" stroke="#a8c4ef" /></S></SB>
        <SB><S w={18} h={17}><rect x=".5" y=".5" width="17" height="16" fill="#fff" stroke="#8b8b8b" /><path d="M9 .5v16" stroke="#8b8b8b" /><path d="M1 8.500h6M5 6l2.500 2.500L5 11" stroke="#3a7eb5" strokeWidth="1.300" /></S></SB>
        <SB><S w={18} h={18}><path d="M10 1l2.500 5.500 5.500.7-4 4 1 5.800-5-2.800-5 2.800 1-5.800-4-4 5.500-.7z" fill="#7aa3e5" stroke="#3a7eb5" /><path d="M3 0v7M0 3.500h7" stroke="#f4c400" strokeWidth="1.800" /></S></SB>
        <SB><S w={18} h={18}><path d="M9 1l2.500 5.500 5.500.7-4 4 1 5.800-5-2.800-5 2.800 1-5.800-4-4 5.500-.7z" fill="#fde3ae" stroke="#f0a820" strokeWidth="1.300" /></S></SB>
      </div>
      <div className="ml-auto mr-[5px]"><Caret c="#000" /></div>
    </div>
    <div className="h-px bg-[#dddddd] mt-[8px] flex-none" />
    <div className="mt-[9px] w-[242px] h-[727px] flex flex-none">
      <div className="w-[226px] bg-white pl-[18px] pt-[14px] font-['DejaVu_Sans',sans-serif] text-[11.300px] leading-[15px] text-[#111] overflow-hidden">
        <h1 className="font-['Open_Sans',sans-serif] font-semibold text-[26.500px] leading-[33.500px] text-[#41719f] whitespace-nowrap">Welcome to<br />FreeOffice!</h1>
        <p className="mt-[15px]">Thank you for choosing FreeOffice<br />as your new office suite.</p>
        <p className="mt-[15px]">FreeOffice is free, friendly,<br />powerful and compatible with<br />Microsoft Office.</p>
        <p className="mt-[15px]">This sidebar contains tips and<br />tricks for using FreeOffice. It<br />also shows the differences to<br />SoftMaker Office, the commercial<br />office suite from SoftMaker.</p>
        <h2 className="mt-[38px] font-['Open_Sans',sans-serif] font-semibold text-[20px] leading-[30px] text-[#41719f]">Navigation</h2>
        <div className="flex gap-[6px] mt-[7px]">
          <NavBtn k="first" /><NavBtn k="prev" /><NavBtn k="next" /><NavBtn k="last" />
        </div>
        <p className="mt-[10px] whitespace-nowrap">You can use these four buttons to<br />navigate between the pages of this<br />sidebar.</p>
        <p className="mt-[15px]">This lets you “fast-forward” to<br />other helpful usage tips, and you<br />can also “rewind” to review older<br />tips pages.</p>
        <p className="mt-[15px] whitespace-nowrap">We hope you enjoy using<br />SoftMaker FreeOffice as much as<br />we did designing and developing it!</p>
      </div>
      <div className="w-[16px] flex flex-col flex-none bg-[#efefef]">
        <div className="h-[16px] flex items-center justify-center bg-[#f6f6f6]"><Chev dir="up" /></div>
        <div className="h-[533px] bg-[#c4c4c4]" />
        <div className="flex-1" />
        <div className="h-[16px] flex items-center justify-center bg-[#f6f6f6]"><Chev dir="down" /></div>
      </div>
    </div>
    <div className="mt-[6px] h-[16px] flex items-center pl-px font-['Noto_Sans',sans-serif] text-[11.400px] text-[#2a10f5] whitespace-nowrap flex-none">Visit the www.freeoffice.com web site</div>
    <div className="flex gap-[6px] mt-[7px] flex-none">
      <NavBtn k="first" on={false} /><NavBtn k="prev" on={false} /><NavBtn k="next" /><NavBtn k="last" />
    </div>
    <Handle className="left-[1px] top-[396px]" />
  </div>
);

/* ---------- status ---------- */
const StatusBox = ({ w, children, className = "" }) => (
  <div className={"h-[18px] bg-white border border-[#dcdcdc] flex items-center px-[3px] flex-none whitespace-nowrap " + w + " " + className}>{children}</div>
);
const StatusBar = () => (
  <div className="h-[28px] flex-none bg-[#eeeeee] border-t border-[#c8c8c8] flex items-center text-[12px] text-[#222] pl-[6px] pb-[2px]">
    <StatusBox w="w-[1000px]" />
    <StatusBox w="w-[100px] ml-[5px]">Слайд 11 из 11</StatusBox>
    <StatusBox w="w-[159px] ml-[5px]">Слайд11</StatusBox>
    <StatusBox w="w-[40px] ml-[6px]" className="justify-center">Вст</StatusBox>
    <Cell w="w-[24px] h-[24px] ml-[3px]" className="bg-[#cde4f7] border border-[#6ea7de]">
      <S w={16} h={14}><rect x=".5" y=".5" width="15" height="13" fill="#fff" stroke="#777" /><path d="M2 3h12M2 6h6M2 8h6M2 10h6" stroke="#888" /><path d="M10 5.500h4v6h-4z" fill="#bbb" /></S>
    </Cell>
    <Cell w="w-[26px]"><S w={15} h={14}><path d="M1 1h5v5H1zM9 1h5v5H9zM1 8h5v5H1zM9 8h5v5H9z" stroke="#777" /></S></Cell>
    <Cell w="w-[25px]"><S w={15} h={14}><rect x="4.500" y=".5" width="10" height="9" fill="#fff" stroke="#888" /><path d="M0 2h3M0 5h3M0 8h3M0 11h3" stroke="#888" /><path d="M6 3h7M6 5h4" stroke="#aaa" /></S></Cell>
    <Cell w="w-[22px]"><S w={16} h={18}><rect x=".5" y=".5" width="14" height="16" fill="#fff" stroke="#888" /><path d="M2 3h11v2H2z" fill="#ccc" /><path d="M2 7h5M2 9h5" stroke="#aaa" /><path d="M7 9h8v8H7z" fill="#fcd58a" stroke="#e3a33c" /></S></Cell>
    <Cell w="w-[26px]"><S w={16} h={20}><rect x=".5" y=".5" width="10" height="7" fill="#fff" stroke="#777" /><path d="M5 8v4h-3v7h7v-7H5" stroke="#777" /><path d="M10 8l5 4-5 4z" fill="#f0a820" /></S></Cell>
    <Cell w="w-[14px]"><Caret /></Cell>
    <span className="ml-[10px] w-[6px] h-px bg-[#888]" />
    <div className="ml-[10px] relative w-[110px] h-[2px] bg-[#dadada] flex items-center flex-none">
      <span className="absolute left-[49px] w-[9px] h-[16px] rounded-full bg-white border border-[#9a9a9a]" />
    </div>
    <span className="ml-[6px] text-[#888] text-[14px] leading-none">+</span>
    <span className="ml-[20px] text-[12px]">99%</span>
    <span className="ml-[10px] text-[#888] text-[12px] leading-none -mt-[10px]">»</span>
  </div>
);

/* ---------- taskbar ---------- */
const Tb = ({ children, line, active, w = "w-[49px]" }) => (
  <div className={"relative h-[40px] flex items-center justify-center flex-none " + w + (active ? " bg-[#f0f0f0]" : "")}>
    {children}
    {line && <div className={"absolute bottom-0 h-[2px] bg-[#0078d4] " + (active ? "inset-x-0" : "inset-x-[4px]")} />}
  </div>
);
const SMLogo = ({ size = 26 }) => (
  <svg width={size} height={size} viewBox="0 0 26 26" className="flex-none overflow-visible">
    <rect x="1" y="1" width="24" height="24" fill="#d48226" stroke="#a86a22" />
    <path d="M15 0h8l3 3v11z" fill="#6b8fd8" />
    <text x="7" y="20" fontSize="18" fontWeight="700" fontFamily="Liberation Sans" fill="#fff">S</text>
    <rect x="3" y="21" width="5" height="2" fill="#fff" />
  </svg>
);
const Taskbar = () => (
  <div className="h-[40px] flex-none flex items-center bg-linear-to-r from-[#d7d7d7] via-[#d2d4d3] to-[#cfdcd8] text-[#111] font-['Roboto',sans-serif]">
    <Tb w="w-[48px]"><S w={17} h={17}><path d="M0 2.500l7-1V8H0zM8 1.300L17 0v8H8zM0 9h7v6.500l-7-1zM8 9h9v8l-9-1.300z" fill="#000" /></S></Tb>
    <Tb w="w-[48px]"><S w={18} h={18}><circle cx="11" cy="7" r="5.500" stroke="#111" strokeWidth="1.300" /><path d="M7 11l-6 6" stroke="#111" strokeWidth="1.300" /></S></Tb>
    <Tb w="w-[48px]"><S w={16} h={18}><ellipse cx="8" cy="9" rx="6" ry="7" stroke="#111" strokeWidth="2" /></S></Tb>
    <Tb w="w-[48px]"><S w={18} h={18}><rect x="1.500" y="4.500" width="11" height="9" stroke="#111" /><path d="M1 1h11M1 17h11M15 1h3M15 6h3M15 9h3M15 12h3M15 16h3" stroke="#111" /></S></Tb>
    <div className="w-[2px] flex-none" />
    <Tb>
      <svg width="24" height="26" viewBox="0 0 24 26">
        <defs><linearGradient id="eg" x1="0" y1="0" x2="1" y2="0"><stop offset="0" stopColor="#0f6db8" /><stop offset="1" stopColor="#37c98e" /></linearGradient></defs>
        <ellipse cx="12" cy="13" rx="12" ry="13" fill="url(#eg)" />
        <path d="M3 14c0-6 5-10 11-9 5 1 8 4 9 8l-5 1c-1-3-4-5-7-4-3 1-4 4-3 8 1 3 5 5 9 4-5 3-14 1-14-8z" fill="#1aa0d8" />
        <path d="M11 14h10c0 3-2 5-3 6-4 1-7-2-7-6z" fill="#d7e3e4" />
      </svg>
    </Tb>
    <Tb>
      <svg width="24" height="28" viewBox="0 0 24 28"><path d="M8 6V3a3 3 0 0 1 3-2h2a3 3 0 0 1 3 2v3" fill="none" stroke="#3ba3e8" strokeWidth="2" /><rect y="6" width="24" height="22" rx="2" fill="#125a8c" /><path d="M7 12h4.500v4.500H7z" fill="#f25022" /><path d="M12.500 12H17v4.500h-4.500z" fill="#7fba00" /><path d="M7 17.500h4.500V22H7z" fill="#00a4ef" /><path d="M12.500 17.500H17V22h-4.500z" fill="#ffb900" /></svg>
    </Tb>
    <Tb>
      <svg width="24" height="26" viewBox="0 0 24 26"><path d="M12 0l12 11v15H0V11z" fill="#0f6cbd" /><path d="M0 11l12 9 12-9v15H0z" fill="#4bb8f0" /><path d="M3 9h18v4l-9 7-9-7z" fill="#fff" /></svg>
    </Tb>
    <Tb line><svg width="24" height="26" viewBox="0 0 24 26"><ellipse cx="12" cy="13" rx="11" ry="12.500" fill="#f2263b" /><ellipse cx="12" cy="13" rx="5" ry="9.500" fill="#dcdcdc" /></svg></Tb>
    <Tb><svg width="24" height="28" viewBox="0 0 24 28"><path d="M17 0l7 3v22l-7 3-11-11-4 3-2-1V9l2-1 4 3z" fill="#8f6cd8" /><path d="M17 7v14l-7-7z" fill="#d8d8d8" /><path d="M0 9l2-1 5 6-5 6-2-1z" fill="#6a3fb8" /></svg></Tb>
    <Tb><svg width="22" height="25" viewBox="0 0 22 25"><path d="M0 1h8l2 3h12v21H0z" fill="#f9d976" /><path d="M0 1h8v5H0z" fill="#e8a93a" /><path d="M5 17h12v8h-4v-4H9v4H5z" fill="#2a86d0" /></svg></Tb>
    <Tb>
      <div className="w-[22px] h-[26px] bg-[#cfe23a] flex items-center justify-center p-[2px]">
        <div className="w-full h-full bg-black text-[#3be07d] text-[9px] font-bold leading-[10px] pl-px">PC<div className="w-[5px] h-px bg-white mt-[7px]" /></div>
      </div>
    </Tb>
    <Tb line><svg width="24" height="26" viewBox="0 0 24 26"><rect width="24" height="26" rx="2" fill="#7a1c1c" /><path d="M5 4l15 18M6 20l3-3M16 5l3 3" stroke="#ddd" strokeWidth="2" /></svg></Tb>
    <Tb line active><SMLogo /></Tb>
    <Tb line><svg width="26" height="26" viewBox="0 0 26 26"><ellipse cx="13" cy="13" rx="12" ry="13" fill="#5865f2" /><path d="M6 9c4-2 10-2 14 0l2 8c-2 1-3 2-5 2l-1-2H10l-1 2c-2 0-3-1-5-2z" fill="#fff" /><circle cx="10" cy="14" r="1.600" fill="#5865f2" /><circle cx="16" cy="14" r="1.600" fill="#5865f2" /></svg></Tb>
    <div className="flex items-center ml-auto pr-[11px]">
      <Cell w="w-[24px]"><S w={12} h={7}><path d="M.5 6.500L6 1l5.500 5.500" stroke="#111" /></S></Cell>
      <Cell w="w-[24px]"><S w={12} h={20}><path d="M2 2c2-1 5-1 7 0M2 18c2 1 5 1 7 0" stroke="#111" /><rect x="1" y="6" width="7" height="8" stroke="#111" /><path d="M8 9l3-2v6l-3-2" stroke="#111" /></S></Cell>
      <Cell w="w-[24px]"><S w={16} h={12}><path d="M3 11a3 3 0 0 1 0-6 5 5 0 0 1 9-1 3.500 3.500 0 0 1 1 7z" fill="#777" stroke="#111" /></S></Cell>
      <Cell w="w-[22px]"><S w={10} h={20}><rect x="2" y="0" width="6" height="13" rx="3" fill="#111" /><path d="M.5 8a4.500 4.500 0 0 0 9 0M5 13v5M2 18.500h6" stroke="#111" /></S></Cell>
      <Cell w="w-[26px]"><S w={16} h={20}><rect x=".5" y="1" width="13" height="18" fill="#fff" stroke="#111" /><path d="M4 6h5M4 10l4-3M9 13l-4 3" stroke="#111" /><circle cx="12" cy="15" r="4" fill="#f39a14" /></S></Cell>
      <Cell w="w-[24px]"><S w={17} h={19}><rect x="5" y=".5" width="11" height="11" stroke="#111" /><rect x="0.5" y="1.500" width="4" height="5" fill="#fff" stroke="#111" /><path d="M10 12v5M6 18h9" stroke="#111" /></S></Cell>
      <Cell w="w-[24px]"><S w={16} h={16}><path d="M1 5h3l3-3v12l-3-3H1z" stroke="#111" /><path d="M10 5c1 2 1 4 0 6M12 3c2 3 2 7 0 10" stroke="#111" /></S></Cell>
      <Cell w="w-[36px]" className="text-[12px]">РУС</Cell>
      <div className="w-[66px] flex-none flex flex-col items-center text-[12px] leading-[18px]"><span>22:04</span><span>13.04.2022</span></div>
      <Cell w="w-[42px]">
        <div className="relative w-[20px] h-[20px]">
          <S w={16} h={16}><path d="M0 0h16v12H7l-3 4v-4H0z" fill="#111" /><path d="M3 3h10M3 5.500h10M3 8h10" stroke="#ddd" /></S>
          <span className="absolute -right-[3px] -bottom-[3px] w-[16px] h-[16px] rounded-full border border-[#333] bg-[#d2d6d5] text-[10px] leading-[14px] text-center">2</span>
        </div>
      </Cell>
    </div>
  </div>
);

export default function App() {
  return (
    <div className="w-[1920px] h-[1080px] overflow-hidden bg-white flex flex-col font-['Roboto',sans-serif] text-[12px] relative">
      {/* title bar */}
      <div className="h-[25px] flex-none flex items-center justify-between">
        <div className="flex items-center pl-[2px] gap-[6px] text-[#111]">
          <SMLogo size={16} />
          <span className="tracking-[-0.15px]">Без имени 1 * - Presentations</span>
        </div>
        <div className="flex pr-[2px]">
          <Cell w="w-[46px]"><S w={10} h={2}><path d="M0 1h10" stroke="#111" /></S></Cell>
          <Cell w="w-[46px]"><S w={10} h={11}><rect x=".5" y="2.500" width="7" height="8" stroke="#111" /><path d="M2.500 2.500v-2h7v8h-2" stroke="#111" /></S></Cell>
          <Cell w="w-[46px]"><S w={11} h={11}><path d="M.5.500l10 10M10.500.500l-10 10" stroke="#111" /></S></Cell>
        </div>
      </div>
      {/* tabs */}
      <div className="h-[23px] flex-none flex items-stretch justify-between text-[#444]">
        <div className="flex items-stretch">
          <Cell w="w-[52px] pl-[3px]">Файл</Cell>
          <Cell w="w-[64px]" className="bg-[#f3f4f6] border-x border-t border-[#dadce0] -mb-px relative">Главная</Cell>
          <Cell w="w-[68px]">Вставить</Cell>
          <Cell w="w-[54px]">Макет</Cell>
          <Cell w="w-[67px]">Переход</Cell>
          <Cell w="w-[77px]">Анимация</Cell>
          <Cell w="w-[101px]">Показ слайдов</Cell>
          <Cell w="w-[40px]">Вид</Cell>
        </div>
        <div className="flex items-center">
          <Cell w="w-[26px]"><S w={15} h={15}><path d="M0 1h3l2 9h8l1-6H4" stroke="#999" /><circle cx="6" cy="13" r="1" fill="#777" /><circle cx="12" cy="13" r="1" fill="#777" /></S></Cell>
          <Cell w="w-[26px]" className="text-[14px] text-[#777]">?</Cell>
          <Cell w="w-[26px]"><S w={10} h={6}><path d="M.5 5.500L5 1l4.500 4.500" stroke="#888" /></S></Cell>
        </div>
      </div>
      <Ribbon />
      {/* quick bar */}
      <div className="h-[27px] flex-none bg-[#eeeeee] border-b border-[#c8c8c8] flex items-center pt-[2px]">
        <Cell w="w-[28px] ml-[4px]"><Burger /></Cell>
        <Sep className="ml-[3px]" />
        <Cell w="w-[26px]"><Hand /></Cell>
        <Sep className="ml-[3px]" />
        <Cell w="w-[28px]"><DocIc /></Cell>
        <Cell w="w-[10px]"><Caret c="#444" /></Cell>
        <Cell w="w-[28px] ml-[2px]"><FolderIc /></Cell>
        <Cell w="w-[12px]"><Caret c="#444" /></Cell>
        <Sep className="ml-[8px]" />
        <Cell w="w-[26px]"><SaveIc /></Cell>
        <Sep className="ml-[4px]" />
        <Cell w="w-[24px]"><UndoIc /></Cell>
        <Cell w="w-[14px]"><Caret c="#444" /></Cell>
        <Cell w="w-[24px] ml-[2px]"><UndoIc c="#bbb" flip /></Cell>
        <Cell w="w-[14px]"><Caret c="#aaa" /></Cell>
        <Cell w="w-[16px]" className="text-[#777] text-[12px] -mt-[12px]">»</Cell>
      </div>
      {/* main */}
      <div className="h-[832px] flex-none flex relative bg-[#eeeeee]">
        <LeftPane />
        <div className="w-[9px] flex-none bg-[#efefef]" />
        <Editor />
        <EditorScroll />
        <Sidebar />
        <Handle className="left-[290px] top-[396px]" />
      </div>
      <StatusBar />
      <Taskbar />
    </div>
  );
}
